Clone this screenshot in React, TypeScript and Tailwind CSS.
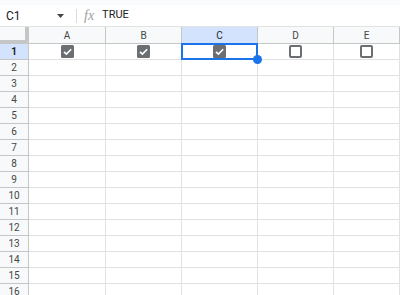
import React from 'react';

const COLS = ['A', 'B', 'C', 'D', 'E'];
const ROWS = Array.from({ length: 16 }, (_, i) => i + 1);
const CHECKED = [true, true, true, false, false];

function CheckBox({ checked }: { checked: boolean }) {
  if (checked) {
    return (
      <svg width="13" height="13" viewBox="0 0 13 13">
        <rect x="0" y="0" width="13" height="13" rx="1.5" fill="#6b6e72" />
        <path d="M3 6.8l2.4 2.3L10.2 4.2" stroke="#fff" strokeWidth="1.6" fill="none" />
      </svg>
    );
  }
  return (
    <svg width="13" height="13" viewBox="0 0 13 13">
      <rect x="1" y="1" width="11" height="11" rx="1" fill="#fff" stroke="#6b6e72" strokeWidth="2" />
    </svg>
  );
}

export default function App() {
  return (
    <div className="w-[400px] h-[295px] overflow-hidden bg-white text-[#3c4043]" style={{ fontFamily: 'Roboto, "Liberation Sans", sans-serif' }}>
      {/* top strip */}
      <div className="h-[5px] bg-[#f9fbfd]" />

      {/* formula bar */}
      <div className="h-[22px] flex items-center border-b border-[#e1e3e1] text-[11px]">
        <div className="w-[70px] flex items-center justify-between pl-[6px] pr-[6px]">
          <span className="text-[12px] text-[#202124]">C1</span>
          <svg width="7" height="4" viewBox="0 0 7 4">
            <path d="M0 0h7L3.5 4z" fill="#444746" />
          </svg>
        </div>
        <div className="w-px h-[14px] bg-[#dadce0] ml-[6px]" />
        <span className="ml-[7px] text-[14px] italic text-[#9aa0a6]" style={{ fontFamily: '"Liberation Serif", serif' }}>fx</span>
        <span className="ml-[8px] text-[11px] text-[#202124]">TRUE</span>
      </div>

      {/* grid */}
      <div className="grid grid-cols-[29px_77px_76px_76px_76px_66px]">
        {/* header row */}
        <div className="h-[17px] bg-[#f8f9fa] border-r-[4px] border-b-[4px] border-[#c4c7c5]" />
        {COLS.map((c, i) => (
          <div
            key={c}
            className={
              'h-[17px] flex items-center justify-center text-[10px] border-r border-b border-[#c4c7c5] ' +
              (i === 2 ? 'bg-[#d3e3fd] text-[#1f1f1f]' : 'bg-[#f8f9fa] text-[#444746]')
            }
          >
            {c}
          </div>
        ))}

        {ROWS.map((r) => (
          <React.Fragment key={r}>
            <div
              className={
                'h-[16px] flex items-center justify-center text-[10px] border-r border-b border-[#c4c7c5] ' +
                (r === 1 ? 'bg-[#d3e3fd] font-bold text-[#1f1f1f]' : 'bg-[#f8f9fa] text-[#444746]')
              }
            >
              {r}
            </div>
            {COLS.map((c, i) => (
              <div
                key={c}
                className={
                  'relative h-[16px] flex items-center justify-center border-r border-b border-[#e1e1e1] ' +
                  (r === 1 && i === 2 ? 'z-10' : '')
                }
              >
                {r === 1 && <CheckBox checked={CHECKED[i]} />}
                {r === 1 && i === 2 && (
                  <>
                    <div className="absolute -left-px -top-px -right-px -bottom-px border-2 border-[#1a73e8]" />
                    <div className="absolute -right-[5px] -bottom-[5px] w-[9px] h-[9px] rounded-full bg-[#1a73e8]" />
                  </>
                )}
              </div>
            ))}
          </React.Fragment>
        ))}
      </div>
    </div>
  );
}
